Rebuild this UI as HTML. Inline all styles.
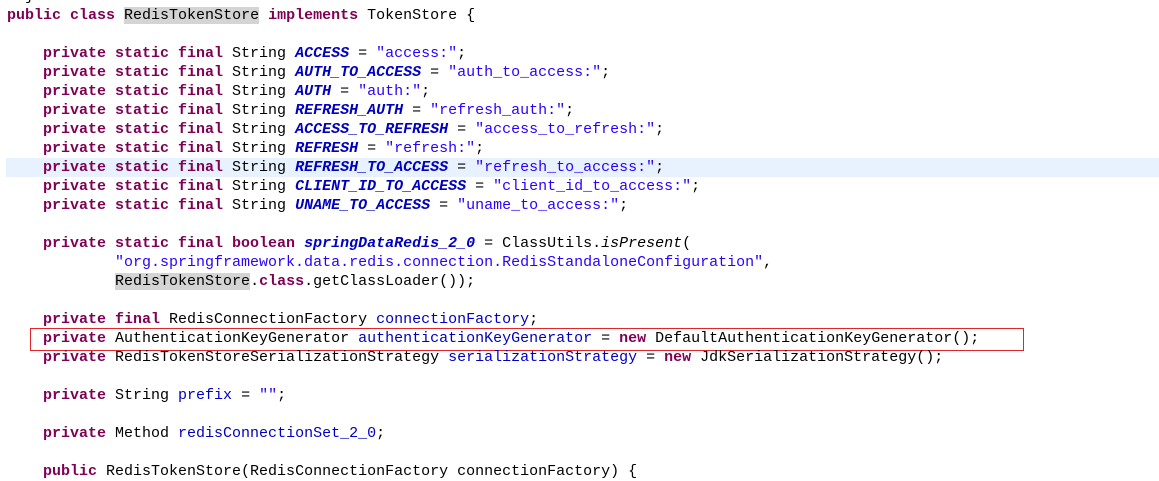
<!DOCTYPE html>
<html><head><meta charset="utf-8"><style>
body{margin:0;width:1159px;height:472px;overflow:hidden;background:#fff;position:relative}
.c{position:absolute;left:7px;top:-13px;font-family:"Liberation Mono",monospace;font-size:15px;line-height:19px;white-space:pre;color:#000}
.k{color:#7f0055;font-weight:bold}.f{color:#0000c0;font-style:italic;font-weight:bold}.v{color:#0000c0}.s{color:#2a00ff}.i{font-style:italic}
.h{background:#d4d4d4}
.cur{position:absolute;left:6px;right:0;top:158px;height:19px;background:#e8f2fe}
.box{position:absolute;left:30px;top:328px;width:992px;height:21px;border:1px solid #e0262a}
</style></head><body>
<div class="cur"></div>
<div class="box"></div>
<div class="c">  }
<span class="k">public class</span> <span class="h">RedisTokenStore</span> <span class="k">implements</span> TokenStore {

    <span class="k">private static final</span> String <span class="f">ACCESS</span> = <span class="s">"access:"</span>;
    <span class="k">private static final</span> String <span class="f">AUTH_TO_ACCESS</span> = <span class="s">"auth_to_access:"</span>;
    <span class="k">private static final</span> String <span class="f">AUTH</span> = <span class="s">"auth:"</span>;
    <span class="k">private static final</span> String <span class="f">REFRESH_AUTH</span> = <span class="s">"refresh_auth:"</span>;
    <span class="k">private static final</span> String <span class="f">ACCESS_TO_REFRESH</span> = <span class="s">"access_to_refresh:"</span>;
    <span class="k">private static final</span> String <span class="f">REFRESH</span> = <span class="s">"refresh:"</span>;
    <span class="k">private static final</span> String <span class="f">REFRESH_TO_ACCESS</span> = <span class="s">"refresh_to_access:"</span>;
    <span class="k">private static final</span> String <span class="f">CLIENT_ID_TO_ACCESS</span> = <span class="s">"client_id_to_access:"</span>;
    <span class="k">private static final</span> String <span class="f">UNAME_TO_ACCESS</span> = <span class="s">"uname_to_access:"</span>;

    <span class="k">private static final boolean</span> <span class="f">springDataRedis_2_0</span> = ClassUtils.<span class="i">isPresent</span>(
            <span class="s">"org.springframework.data.redis.connection.RedisStandaloneConfiguration"</span>,
            <span class="h">RedisTokenStore</span>.<span class="k">class</span>.getClassLoader());

    <span class="k">private final</span> RedisConnectionFactory <span class="v">connectionFactory</span>;
    <span class="k">private</span> AuthenticationKeyGenerator <span class="v">authenticationKeyGenerator</span> = <span class="k">new</span> DefaultAuthenticationKeyGenerator();
    <span class="k">private</span> RedisTokenStoreSerializationStrategy <span class="v">serializationStrategy</span> = <span class="k">new</span> JdkSerializationStrategy();

    <span class="k">private</span> String <span class="v">prefix</span> = <span class="s">""</span>;

    <span class="k">private</span> Method <span class="v">redisConnectionSet_2_0</span>;

    <span class="k">public</span> RedisTokenStore(RedisConnectionFactory connectionFactory) {
</div>
</body></html>
